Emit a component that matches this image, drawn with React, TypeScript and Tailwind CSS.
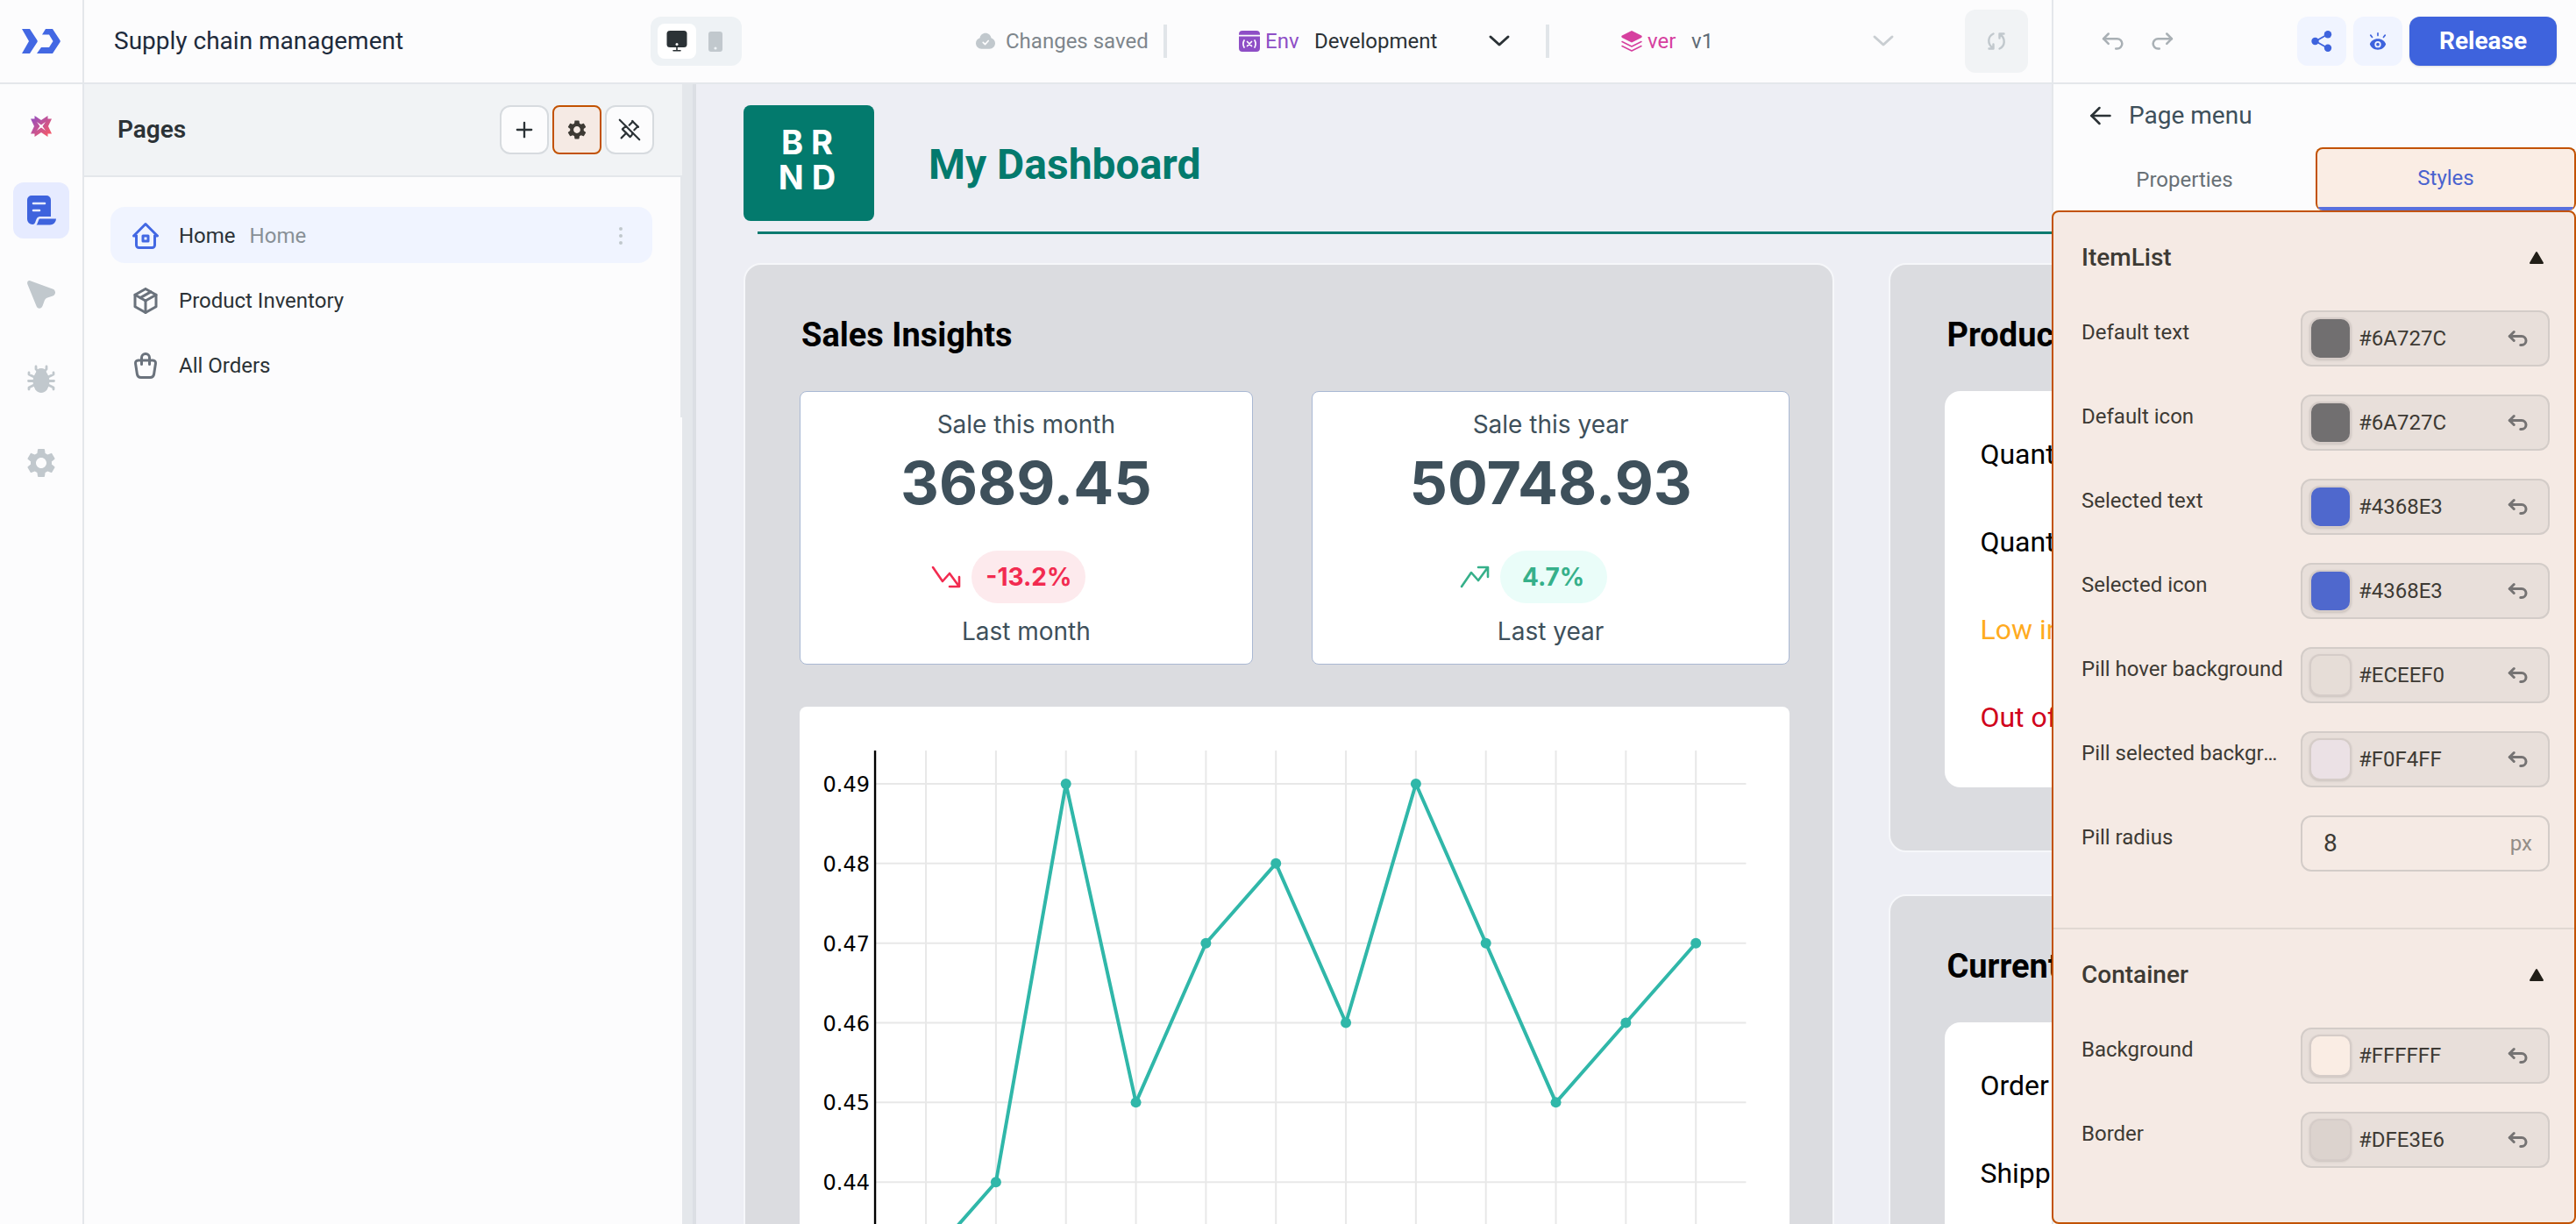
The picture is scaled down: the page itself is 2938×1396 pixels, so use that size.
import type { ReactNode } from "react";
import { MdSettings } from "react-icons/md";
import {
  TbArrowBackUp,
  TbArrowForwardUp,
  TbArrowLeft,
  TbHome2,
  TbPackage,
  TbPlus,
  TbShoppingBag,
} from "react-icons/tb";

const COLOR_FIELDS = [
  { label: "Default text", value: "#6A727C", swatch: "bg-[#716f70]" },
  { label: "Default icon", value: "#6A727C", swatch: "bg-[#716f70]" },
  { label: "Selected text", value: "#4368E3", swatch: "bg-[#4f68cd]" },
  { label: "Selected icon", value: "#4368E3", swatch: "bg-[#4f68cd]" },
  { label: "Pill hover background", value: "#ECEEF0", swatch: "bg-[#e6ddd7]" },
  { label: "Pill selected background", value: "#F0F4FF", swatch: "bg-[#ebe1e5]" },
];

const CONTAINER_FIELDS = [
  { label: "Background", value: "#FFFFFF", swatch: "bg-[#faede4]" },
  { label: "Border", value: "#DFE3E6", swatch: "bg-[#dcd3ce]" },
];

const SERIES = [0.43, 0.44, 0.49, 0.45, 0.47, 0.48, 0.46, 0.49, 0.47, 0.45, 0.46, 0.47];
const TICKS = [0.49, 0.48, 0.47, 0.46, 0.45, 0.44];

function Logo() {
  return (
    <svg width="44" height="28" viewBox="0 0 44 28" fill="#4368e3" aria-hidden="true">
      <path d="M0 0h9l8.500 13a2 2 0 0 1 0 2L9 28H0l8-14z" />
      <path d="M23 6.500L27 0h8l8.500 13a2 2 0 0 1 0 2L35 28H17l5-7h9l4.500-7L31 6.500z" />
    </svg>
  );
}

function SparkIcon() {
  return (
    <svg width="24" height="24" viewBox="0 0 24 24" aria-hidden="true">
      <defs>
        <linearGradient id="spark" x1="0" y1="0" x2="1" y2="1">
          <stop offset="0" stopColor="#8e4ec6" />
          <stop offset="1" stopColor="#ff5a5f" />
        </linearGradient>
      </defs>
      <path
        fill="url(#spark)"
        fillRule="evenodd"
        d="M4.500 0L12 5l7.500-5v3.500H24L20 12l4 8.500h-4.500V24L12 19l-7.500 5v-3.500H0L4 12 0 3.500h4.500zM7 7l3.500 5L7 17l5-3.500 5 3.500-3.500-5L17 7l-5 3.500z"
      />
    </svg>
  );
}

function PagesIcon() {
  return (
    <svg width="34" height="34" viewBox="0 0 34 34" aria-hidden="true">
      <path fill="#3e63dd" d="M6 0h17a5 5 0 0 1 5 5v19H15a4 4 0 0 0-3.500 3l-1.500 4a3 3 0 0 1-3 2A6 6 0 0 1 1 27V5a5 5 0 0 1 5-5z" />
      <path fill="#3e63dd" d="M15 26.500h19a7 7 0 0 1-7 7H11.500c1.500-1 2-5.500 3.500-7z" />
      <path stroke="#e6ebff" strokeWidth="2.600" strokeLinecap="round" d="M8 9h13M8 17h7" />
    </svg>
  );
}

function CursorIcon() {
  return (
    <svg width="32" height="32" viewBox="0 0 32 32" fill="#c1c8cd" aria-hidden="true">
      <path d="M3.500.300l26 9.500c3.500 1.500 3.300 6.500-.300 7.700l-6 2c-1.700.600-2.800 1.600-3.400 3.300l-2.200 6c-1.300 3.800-6 4-7.200 0L.300 4C-.500 1.500 1.300-.500 3.500.300z" />
    </svg>
  );
}

function BugIcon() {
  return (
    <svg width="32" height="32" viewBox="0 0 32 32" aria-hidden="true">
      <path
        fill="none"
        stroke="#c1c8cd"
        strokeWidth="2.800"
        strokeLinecap="round"
        strokeLinejoin="round"
        d="M10 2v3l3 3M22 2v3l-3 3M2 9v2l6 3M30 9v2l-6 3M1.500 18.500H8M30.500 18.500H24M2 28v-2l6-3M30 28v-2l-6-3"
      />
      <ellipse cx="16" cy="19" rx="9.500" ry="13" fill="#c1c8cd" />
      <path fill="#c1c8cd" d="M10 9a6 5 0 0 1 12 0z" />
    </svg>
  );
}

function UnpinIcon() {
  return (
    <svg
      width="30"
      height="30"
      viewBox="0 0 24 24"
      fill="none"
      stroke="currentColor"
      strokeWidth="1.700"
      strokeLinecap="round"
      strokeLinejoin="round"
      aria-hidden="true"
    >
      <path d="M3 3l18 18" />
      <path d="M15 4.500l-3.250 3.250M9.180 9.180L7 10l-1.500 1.500 7 7L14 17l.820-2.190M16.250 12.250L19.500 9" />
      <path d="M9 15l-4.500 4.500M14.500 4L20 9.500" />
    </svg>
  );
}

function DesktopIcon() {
  return (
    <svg width="24" height="24" viewBox="0 0 24 24" aria-hidden="true">
      <rect x="0.500" y="0" width="23" height="19" rx="3.500" fill="#2b3236" />
      <path stroke="#2b3236" strokeWidth="1.600" strokeLinecap="round" d="M12 19v3.500M8 22.700h8" />
      <circle cx="12" cy="15.500" r="1.500" fill="#fff" />
    </svg>
  );
}

function CloudCheckIcon() {
  return (
    <svg width="22" height="20" viewBox="0 0 24 20" aria-hidden="true">
      <path fill="#c1c8cd" d="M12 0c3.700 0 6.500 2.600 7 6 2.800.900 5 3.400 5 6.500 0 4-3 7-7 7H7c-4 0-7-3-7-7C0 9.400 2 7 5 6c.500-3.400 3.300-6 7-6z" />
      <path fill="none" stroke="#fcfcfd" strokeWidth="1.900" strokeLinecap="round" strokeLinejoin="round" d="M9 11.500l2.500 2.500 4-4.500" />
    </svg>
  );
}

function EnvIcon() {
  return (
    <svg width="24" height="24" viewBox="0 0 24 24" aria-hidden="true">
      <path fill="#8e4ec6" d="M4 0h16a4 4 0 0 1 4 4v.800H0V4a4 4 0 0 1 4-4zM0 6.400h24V20a4 4 0 0 1-4 4H4a4 4 0 0 1-4-4z" />
      <path
        fill="none"
        stroke="#fff"
        strokeWidth="1.700"
        strokeLinecap="round"
        d="M6 11q-2.200 4 0 8M18 11q2.200 4 0 8M9.500 12.500l5 5M14.500 12.500l-5 5"
      />
    </svg>
  );
}

function LayersIcon() {
  return (
    <svg width="24" height="24" viewBox="0 0 24 24" aria-hidden="true">
      <path fill="#d6409f" d="M12 0l11 5.500c1 .600 1 1.800 0 2.400L12 13.500 1 7.900C0 7.300 0 6.100 1 5.500z" />
      <path
        fill="none"
        stroke="#d6409f"
        strokeWidth="1.500"
        strokeLinecap="round"
        strokeLinejoin="round"
        d="M1 12.500l11 5.500 11-5.500M1 17.500L12 23l11-5.500"
      />
    </svg>
  );
}

function ChevronDown({ className }: { className: string }) {
  return (
    <svg width="26" height="16" viewBox="0 0 26 16" className={className} aria-hidden="true">
      <path fill="none" stroke="currentColor" strokeWidth="3" strokeLinecap="round" strokeLinejoin="round" d="M3 3l10 9L23 3" />
    </svg>
  );
}

function SyncIcon() {
  return (
    <svg width="22" height="22" viewBox="0 0 22 22" aria-hidden="true">
      <path
        fill="none"
        stroke="#c1c8cd"
        strokeWidth="2.400"
        strokeLinecap="round"
        strokeLinejoin="round"
        d="M7.500 2.500C1 5.500.500 14 6.500 18.500M2.500 19.500h5v-5M14.500 19.500C21 16.500 21.500 8 15.500 3.500M19.500 2.500h-5v5"
      />
    </svg>
  );
}

function ShareIcon() {
  return (
    <svg width="24" height="24" viewBox="0 0 24 24" aria-hidden="true">
      <path stroke="#3e63dd" strokeWidth="1.800" d="M19 4L5 12l14 8" fill="none" />
      <circle cx="4.500" cy="12" r="4.200" fill="#3e63dd" />
      <circle cx="19" cy="4.200" r="4.200" fill="#3e63dd" />
      <circle cx="19" cy="19.800" r="4.200" fill="#3e63dd" />
    </svg>
  );
}

function PreviewIcon() {
  return (
    <svg width="22" height="22" viewBox="0 0 24 22" aria-hidden="true">
      <path
        fill="#3e63dd"
        fillRule="evenodd"
        d="M12 8c5 0 8.500 2.600 10 6.500C20.500 18.800 17 21.500 12 21.500S3.500 18.800 2 14.500C3.500 10.600 7 8 12 8zm0 3a4 4 0 1 0 0 8 4 4 0 0 0 0-8z"
      />
      <circle cx="12" cy="15" r="2" fill="#3e63dd" />
      <path stroke="#3e63dd" strokeWidth="1.800" strokeLinecap="round" d="M12 1v3M3 3.500L5 6M21 3.500L19 6" />
    </svg>
  );
}

function TrendIcon({ up }: { up?: boolean }) {
  return (
    <svg width="34" height="26" viewBox="0 0 34 26" aria-hidden="true">
      <path
        fill="none"
        stroke={up ? "#36b08a" : "#f22b50"}
        strokeWidth="2.600"
        strokeLinecap="round"
        strokeLinejoin="round"
        d={up ? "M2 24l11-16 8 9L32 2M21 2h11v11" : "M2 2l11 16 8-9L32 24M21 24h11V13"}
      />
    </svg>
  );
}

function TriangleIcon() {
  return (
    <svg width="18" height="16" viewBox="0 0 18 16" aria-hidden="true">
      <path fill="#221f18" stroke="#221f18" strokeWidth="2" strokeLinejoin="round" d="M9 2l7 12H2z" />
    </svg>
  );
}

function RailButton({ label, active, children }: { label: string; active?: boolean; children: ReactNode }) {
  return (
    <button
      aria-label={label}
      className={
        active
          ? "flex size-16 items-center justify-center rounded-xl bg-[#e6ebff]"
          : "flex size-16 items-center justify-center rounded-xl text-[#c1c8cd]"
      }
    >
      {children}
    </button>
  );
}

function PageRow({ icon, name, badge, active }: { icon: ReactNode; name: string; badge?: string; active?: boolean }) {
  return (
    <li
      className={
        active
          ? "flex h-16 items-center rounded-2xl bg-[#f0f4ff] pt-0.5 pr-8 pl-[22px] text-[#4368e3]"
          : "flex h-16 items-center rounded-2xl pt-0.5 pr-8 pl-[22px] text-[#6a727c]"
      }
    >
      {icon}
      <a href="#" className="ml-5 text-2xl text-[#2b3236]">
        {name}
      </a>
      {badge && <span className="ml-4 text-2xl text-[#889096]">{badge}</span>}
      {active && (
        <button aria-label="Page options" className="ml-auto">
          <svg width="8" height="24" viewBox="0 0 8 24" fill="#c1c8cd" aria-hidden="true">
            <circle cx="4" cy="4" r="2" />
            <circle cx="4" cy="12" r="2" />
            <circle cx="4" cy="20" r="2" />
          </svg>
        </button>
      )}
    </li>
  );
}

function ColorField({ label, value, swatch }: { label: string; value: string; swatch: string }) {
  return (
    <div className="flex items-start justify-between">
      <span className="w-[236px] truncate text-2xl leading-[50px] text-[#3d3a34]">{label}</span>
      <div className="flex h-16 w-[284px] items-center rounded-xl border-2 border-[#d3ccc8] bg-[#e8dfda] pr-5 pl-2">
        <button
          aria-label={`${label} colour`}
          className={`size-12 shrink-0 rounded-xl border-2 border-[#d5ccc8] shadow-sm ${swatch}`}
        />
        <input
          aria-label={label}
          defaultValue={value}
          className="ml-2 w-0 flex-1 bg-transparent text-2xl text-[#3d3a34] outline-none"
        />
        <button aria-label={`Reset ${label}`} className="text-[#757373]">
          <TbArrowBackUp size={30} strokeWidth={2.4} />
        </button>
      </div>
    </div>
  );
}

function SectionHeading({ children }: { children: string }) {
  return (
    <div className="mb-10 flex h-10 items-center justify-between pr-1.5">
      <h3 className="text-[28px] font-medium text-[#3d3a34]">{children}</h3>
      <button aria-label={`Collapse ${children}`}>
        <TriangleIcon />
      </button>
    </div>
  );
}

function StatCard({ title, value, change, footer, up }: { title: string; value: string; change: string; footer: string; up?: boolean }) {
  return (
    <div className="flex h-[312px] flex-col items-center rounded-lg border border-[#a9b8d3] bg-white pt-[17px] font-['Inter',sans-serif] text-[#3e505b]">
      <p className="text-[28px] leading-[40px]">{title}</p>
      <p className="mt-2.5 text-[68px] leading-[72px] font-bold">{value}</p>
      <div className="mt-[42px] flex items-center gap-3 pr-10">
        <TrendIcon up={up} />
        <span
          className={
            up
              ? "flex h-[60px] min-w-[122px] items-center justify-center rounded-full bg-[#eafdf9] px-4 text-[28px] font-bold text-[#36b08a]"
              : "flex h-[60px] min-w-[122px] items-center justify-center rounded-full bg-[#fdeaed] px-4 text-[28px] font-bold text-[#f22b50]"
          }
        >
          {change}
        </span>
      </div>
      <p className="mt-3 text-[28px] leading-[40px]">{footer}</p>
    </div>
  );
}

function SalesChart() {
  const x = (i: number) => 144 + i * 79.8;
  const y = (v: number) => 88 + (0.49 - v) * 9080;
  return (
    <svg viewBox="0 0 1129 620" className="w-full" role="img" aria-label="Sales chart">
      <g stroke="#e8e8e8" strokeWidth="2">
        {SERIES.map((_, i) => (
          <line key={i} x1={x(i)} x2={x(i)} y1="50" y2="620" />
        ))}
        {TICKS.map((t) => (
          <line key={t} x1="86" x2="1079" y1={y(t)} y2={y(t)} />
        ))}
      </g>
      <line x1="86" x2="86" y1="50" y2="620" stroke="#000" strokeWidth="2.400" />
      {TICKS.map((t) => (
        <text key={t} x="80" y={y(t) + 9} textAnchor="end" fontSize="24" fontFamily="'DejaVu Sans', sans-serif" fill="#000">
          {t.toFixed(2)}
        </text>
      ))}
      <polyline
        points={SERIES.map((v, i) => `${x(i)},${y(v)}`).join(" ")}
        fill="none"
        stroke="#30b7a9"
        strokeWidth="4"
        strokeLinejoin="round"
      />
      {SERIES.map((v, i) => (
        <circle key={i} cx={x(i)} cy={y(v)} r="6" fill="#30b7a9" />
      ))}
    </svg>
  );
}

function Header() {
  return (
    <header className="flex h-24 shrink-0 border-b-2 border-[#e4e7eb] bg-[#fcfcfd]">
      <div className="flex w-24 shrink-0 items-center justify-center border-r-2 border-[#e4e7eb]">
        <Logo />
      </div>
      <div className="flex w-[750px] shrink-0 items-center justify-between pl-[34px]">
        <h1 className="text-[28px] text-[#1e2b3c]">Supply chain management</h1>
        <div className="flex h-14 w-[104px] items-center gap-3.5 rounded-xl bg-[#eef2f5] px-2">
          <button aria-label="Desktop layout" className="flex h-10 w-11 items-center justify-center rounded-lg bg-white">
            <DesktopIcon />
          </button>
          <button aria-label="Mobile layout">
            <svg width="16" height="23" viewBox="0 0 16 23" aria-hidden="true">
              <rect width="16" height="23" rx="3" fill="#c1c8cd" />
              <circle cx="8" cy="19" r="1.600" fill="#eef2f5" />
            </svg>
          </button>
        </div>
      </div>
      <div className="flex flex-1 items-center justify-end pr-[27px] text-2xl">
        <CloudCheckIcon />
        <span className="ml-3 w-[160px] whitespace-nowrap text-[#7e868c]">Changes saved</span>
        <span className="ml-5 h-[38px] w-1 bg-[#e1e5e9]" />
        <button className="ml-[82px] flex w-[310px] items-center text-[#2b3236]">
          <EnvIcon />
          <span className="ml-1.5 w-10 text-left text-[#8e4ec6]">Env</span>
          <span className="ml-4">Development</span>
          <ChevronDown className="ml-auto" />
        </button>
        <span className="ml-10 h-[38px] w-1 bg-[#e1e5e9]" />
        <button className="ml-[82px] flex w-[312px] items-center text-[#5f6b76]">
          <LayersIcon />
          <span className="ml-1.5 w-9 text-left text-[#d6409f]">ver</span>
          <span className="ml-3.5">v1</span>
          <ChevronDown className="ml-auto text-[#c9ced2]" />
        </button>
        <button aria-label="Sync" className="ml-20 flex size-[72px] items-center justify-center rounded-xl bg-[#f1f3f5]">
          <SyncIcon />
        </button>
      </div>
      <div className="flex w-[598px] shrink-0 items-center border-l-2 border-[#e4e7eb] pr-[22px] pl-[50px]">
        <button aria-label="Undo" className="text-[#a9b0b5]">
          <TbArrowBackUp size={34} strokeWidth={1.8} />
        </button>
        <button aria-label="Redo" className="ml-6 text-[#a9b0b5]">
          <TbArrowForwardUp size={34} strokeWidth={1.8} />
        </button>
        <div className="ml-auto flex gap-2">
          <button aria-label="Share" className="flex size-14 items-center justify-center rounded-xl bg-[#f0f4ff]">
            <ShareIcon />
          </button>
          <button aria-label="Preview" className="flex size-14 items-center justify-center rounded-xl bg-[#f0f4ff]">
            <PreviewIcon />
          </button>
          <button className="h-14 w-[168px] rounded-xl bg-[#3e63dd] text-[28px] font-bold text-white shadow-sm">Release</button>
        </div>
      </div>
    </header>
  );
}

function PagesPanel() {
  return (
    <aside className="flex w-[682px] shrink-0 flex-col bg-[#fcfcfd]">
      <div className="flex h-[106px] items-center gap-1 border-b-2 border-[#e4e7eb] bg-[#f1f3f5] pr-8 pl-[38px]">
        <h2 className="mr-auto text-[28px] font-semibold text-[#2b3236]">Pages</h2>
        <button aria-label="Add page" className="flex size-14 items-center justify-center rounded-xl border-2 border-[#d7dbdf] bg-[#fcfcfd] text-[#2b3236]">
          <TbPlus size={28} />
        </button>
        <button aria-label="Page settings" className="flex size-14 items-center justify-center rounded-lg border-2 border-[#c25201] bg-[#f5eae4] text-[#3d3a34]">
          <MdSettings size={26} />
        </button>
        <button aria-label="Unpin panel" className="flex size-14 items-center justify-center rounded-xl border-2 border-[#d7dbdf] bg-[#fcfcfd] text-[#2b3236]">
          <UnpinIcon />
        </button>
      </div>
      <ul className="flex h-[274px] flex-col gap-2.5 border-r-2 border-[#e4e7eb] pt-[34px] pr-8 pl-[30px]">
        <PageRow active icon={<TbHome2 size={36} />} name="Home" badge="Home" />
        <PageRow icon={<TbPackage size={36} />} name="Product Inventory" />
        <PageRow icon={<TbShoppingBag size={36} />} name="All Orders" />
      </ul>
    </aside>
  );
}

function InfoCard({ title, lines }: { title: string; lines: { text: string; color: string }[] }) {
  return (
    <section className="rounded-[20px] border-2 border-[#f6f7fa] bg-[#dbdce0] px-[62px] pt-[52px] pb-[72px]">
      <h3 className="mb-[36px] pl-0.5 text-[38px] leading-[56px] font-bold whitespace-nowrap text-black">{title}</h3>
      <ul className="rounded-[18px] bg-white pt-[22px] pb-[30px] pl-10">
        {lines.map((l) => (
          <li key={l.text} className={`flex h-[100px] items-center text-[32px] whitespace-nowrap ${l.color}`}>
            {l.text}
          </li>
        ))}
      </ul>
    </section>
  );
}

function Canvas() {
  return (
    <main className="min-w-0 flex-1 overflow-hidden border-l-[12px] border-[#e4e7eb] bg-[#edeef4]">
      <div className="h-full border-l-4 border-[#dcdfe4] pt-6 pl-[54px]">
        <div className="flex items-center">
          <div className="flex h-[132px] w-[149px] flex-col items-center justify-center rounded-lg bg-[#037a6d] pr-1 pb-2 font-['Inter',sans-serif] text-[38px] leading-[40px] font-bold text-white">
            <span>B R</span>
            <span>N D</span>
          </div>
          <h2 className="ml-[62px] pt-1 text-[48px] font-bold text-[#037a6d]">My Dashboard</h2>
        </div>
        <div className="mt-3 ml-4 h-[3px] bg-[#0b7a70]" />
        <div className="mt-[33px] grid w-[134%] grid-cols-[1243fr_692fr] gap-[62px]">
          <section className="rounded-[20px] border-2 border-[#f6f7fa] bg-[#dbdce0] pt-[52px] pr-[49px] pl-[62px]">
            <h3 className="mb-[36px] pl-0.5 text-[38px] leading-[56px] font-bold text-black">Sales Insights</h3>
            <div className="grid grid-cols-[516fr_545fr] gap-[67px]">
              <StatCard title="Sale this month" value="3689.45" change="-13.2%" footer="Last month" />
              <StatCard title="Sale this year" value="50748.93" change="4.7%" footer="Last year" up />
            </div>
            <div className="mt-12 rounded-lg bg-white">
              <SalesChart />
            </div>
          </section>
          <div className="flex flex-col gap-12">
            <InfoCard
              title="Product Inventory"
              lines={[
                { text: "Quantity in stock", color: "text-black" },
                { text: "Quantity to be received", color: "text-black" },
                { text: "Low in stock", color: "text-[#ffab1f]" },
                { text: "Out of stock", color: "text-[#d0021b]" },
              ]}
            />
            <InfoCard
              title="Current Orders"
              lines={[
                { text: "Order placed", color: "text-black" },
                { text: "Shipping", color: "text-black" },
              ]}
            />
          </div>
        </div>
      </div>
    </main>
  );
}

function Inspector() {
  return (
    <aside className="flex w-[598px] shrink-0 flex-col border-l-2 border-[#e4e7eb] bg-[#fcfcfd]">
      <div className="flex h-[72px] items-center gap-3.5 pl-9">
        <button aria-label="Back">
          <TbArrowLeft size={36} strokeWidth={1.7} className="text-[#2b3236]" />
        </button>
        <h2 className="text-[28px] text-[#3e505b]">Page menu</h2>
      </div>
      <div role="tablist" className="flex h-[72px] text-2xl">
        <button role="tab" aria-selected="false" className="flex-1 pt-0.5 text-[#687076]">
          Properties
        </button>
        <button
          role="tab"
          aria-selected="true"
          className="w-[297px] overflow-hidden rounded-lg border-2 border-b-0 border-[#c25201] bg-[#faede4] text-[#4a63cf]"
        >
          <span className="flex h-full items-center justify-center border-b-4 border-[#5a70dc]">Styles</span>
        </button>
      </div>
      <div className="-ml-0.5 flex-1 rounded-lg border-2 border-[#c25201] bg-[#f5eae4]">
        <section className="border-b-2 border-[#e1d8d2] pt-8 pr-7 pb-16 pl-8">
          <SectionHeading>ItemList</SectionHeading>
          <div className="flex flex-col gap-8">
            {COLOR_FIELDS.map((f) => (
              <ColorField key={f.label} {...f} />
            ))}
            <div className="flex items-start justify-between">
              <label htmlFor="radius" className="text-2xl leading-[50px] text-[#3d3a34]">
                Pill radius
              </label>
              <div className="flex h-16 w-[284px] items-center rounded-xl border-2 border-[#d3ccc8] pr-[18px] pl-6">
                <input id="radius" defaultValue="8" className="w-0 flex-1 bg-transparent text-[28px] text-[#3d3a34] outline-none" />
                <span className="text-2xl text-[#938d87]">px</span>
              </div>
            </div>
          </div>
        </section>
        <section className="pt-8 pr-7 pl-8">
          <SectionHeading>Container</SectionHeading>
          <div className="flex flex-col gap-8">
            {CONTAINER_FIELDS.map((f) => (
              <ColorField key={f.label} {...f} />
            ))}
          </div>
        </section>
      </div>
    </aside>
  );
}

export default function App() {
  return (
    <div className="flex h-screen flex-col overflow-hidden bg-[#fcfcfd] font-['Roboto',sans-serif]">
      <Header />
      <div className="flex min-h-0 flex-1">
        <nav className="flex w-24 shrink-0 flex-col items-center gap-8 border-r-2 border-[#e4e7eb] bg-[#fcfcfd] pt-4">
          <RailButton label="Assistant">
            <SparkIcon />
          </RailButton>
          <RailButton label="Pages" active>
            <PagesIcon />
          </RailButton>
          <RailButton label="Inspector">
            <CursorIcon />
          </RailButton>
          <RailButton label="Debugger">
            <BugIcon />
          </RailButton>
          <RailButton label="Settings">
            <MdSettings size={40} />
          </RailButton>
        </nav>
        <PagesPanel />
        <Canvas />
        <Inspector />
      </div>
    </div>
  );
}
